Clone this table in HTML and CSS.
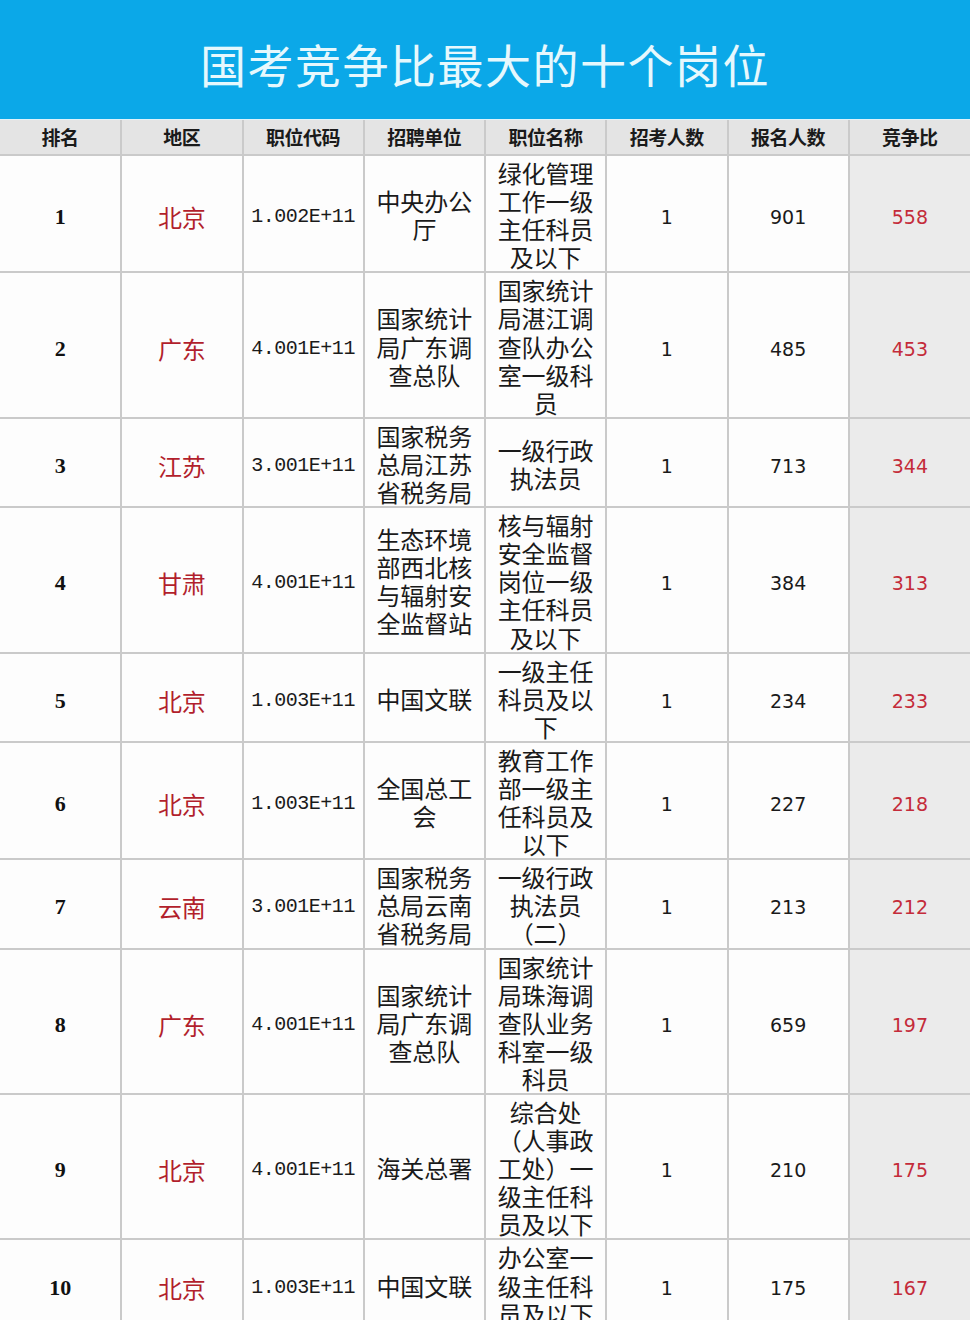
FILE: index.html
```html
<!DOCTYPE html>
<html lang="zh-CN">
<head>
<meta charset="utf-8">
<title>国考竞争比最大的十个岗位</title>
<link rel="stylesheet" href="styles.css">
</head>
<body>
<div class="page">
  <header class="banner">
    <h1 class="title">国考竞争比最大的十个岗位</h1>
  </header>
  <table class="grid">
    <colgroup>
      <col><col><col><col><col><col><col><col>
    </colgroup>
    <thead>
      <tr>
        <th>排名</th><th>地区</th><th>职位代码</th><th>招聘单位</th><th>职位名称</th><th>招考人数</th><th>报名人数</th><th>竞争比</th>
      </tr>
    </thead>
    <tbody>
      <tr>
        <td class="rank">1</td><td class="region">北京</td><td class="code">1.002E+11</td><td class="zh">中央办公厅</td><td class="zh">绿化管理工作一级主任科员及以下</td><td class="num">1</td><td class="num">901</td><td class="ratio">558</td>
      </tr>
      <tr>
        <td class="rank">2</td><td class="region">广东</td><td class="code">4.001E+11</td><td class="zh">国家统计局广东调查总队</td><td class="zh">国家统计局湛江调查队办公室一级科员</td><td class="num">1</td><td class="num">485</td><td class="ratio">453</td>
      </tr>
      <tr>
        <td class="rank">3</td><td class="region">江苏</td><td class="code">3.001E+11</td><td class="zh">国家税务总局江苏省税务局</td><td class="zh">一级行政执法员</td><td class="num">1</td><td class="num">713</td><td class="ratio">344</td>
      </tr>
      <tr>
        <td class="rank">4</td><td class="region">甘肃</td><td class="code">4.001E+11</td><td class="zh">生态环境部西北核与辐射安全监督站</td><td class="zh">核与辐射安全监督岗位一级主任科员及以下</td><td class="num">1</td><td class="num">384</td><td class="ratio">313</td>
      </tr>
      <tr>
        <td class="rank">5</td><td class="region">北京</td><td class="code">1.003E+11</td><td class="zh">中国文联</td><td class="zh">一级主任科员及以下</td><td class="num">1</td><td class="num">234</td><td class="ratio">233</td>
      </tr>
      <tr>
        <td class="rank">6</td><td class="region">北京</td><td class="code">1.003E+11</td><td class="zh">全国总工会</td><td class="zh">教育工作部一级主任科员及以下</td><td class="num">1</td><td class="num">227</td><td class="ratio">218</td>
      </tr>
      <tr>
        <td class="rank">7</td><td class="region">云南</td><td class="code">3.001E+11</td><td class="zh">国家税务总局云南省税务局</td><td class="zh">一级行政执法员（二）</td><td class="num">1</td><td class="num">213</td><td class="ratio">212</td>
      </tr>
      <tr>
        <td class="rank">8</td><td class="region">广东</td><td class="code">4.001E+11</td><td class="zh">国家统计局广东调查总队</td><td class="zh">国家统计局珠海调查队业务科室一级科员</td><td class="num">1</td><td class="num">659</td><td class="ratio">197</td>
      </tr>
      <tr>
        <td class="rank">9</td><td class="region">北京</td><td class="code">4.001E+11</td><td class="zh">海关总署</td><td class="zh">综合处（人事政工处）一级主任科员及以下</td><td class="num">1</td><td class="num">210</td><td class="ratio">175</td>
      </tr>
      <tr>
        <td class="rank">10</td><td class="region">北京</td><td class="code">1.003E+11</td><td class="zh">中国文联</td><td class="zh">办公室一级主任科员及以下</td><td class="num">1</td><td class="num">175</td><td class="ratio">167</td>
      </tr>
    </tbody>
  </table>
</div>
</body>
</html>
```
FILE: styles.css
```css
html, body {
  margin: 0;
  padding: 0;
  background: #ffffff;
}

.page {
  width: 970px;
  font-family: "Noto Sans CJK SC", "Noto Sans", sans-serif;
  color: #151515;
}

.banner {
  height: 119px;
  background: #0ba8e8;
  display: flex;
  align-items: center;
  justify-content: center;
  border-bottom: 1px solid #dff2fa;
}

.title {
  margin: 0;
  padding: 6px 0 0 0;
  font-family: "Noto Sans CJK SC", sans-serif;
  font-weight: 400;
  font-size: 46px;
  letter-spacing: 1.5px;
  color: #e6f8fd;
  line-height: 1;
}

.grid {
  width: 970px;
  table-layout: fixed;
  border-collapse: collapse;
  border-spacing: 0;
}

.grid col {
  width: 121.25px;
}

.grid th,
.grid td {
  border: 2px solid #cacaca;
  padding: 0 6px;
  text-align: center;
  vertical-align: middle;
}

.grid tr > :first-child {
  border-left: none;
}

.grid tr > :last-child {
  border-right: none;
}

.grid thead tr > * {
  border-top: none;
}

.grid th {
  background: #e4e4e4;
  font-weight: 700;
  font-size: 19px;
  line-height: 34px;
  color: #1a1a1a;
  letter-spacing: -0.5px;
}

.grid td {
  background: #fdfdfd;
  font-size: 24px;
  line-height: 28.1px;
  padding-top: 7px;
  overflow: hidden;
  color: #1a1a1a;
}

.grid td.zh {
  padding-top: 3px;
}

.grid td.rank {
  font-family: "Liberation Serif", serif;
  font-weight: 700;
  font-size: 22px;
  color: #111;
}

.grid td.region {
  color: #b21f2c;
}

.grid td.code {
  font-family: "Liberation Mono", monospace;
  font-size: 20px;
  letter-spacing: -0.5px;
  padding-left: 0;
  padding-right: 0;
  color: #1a1a1a;
}

.grid td.num {
  font-family: "DejaVu Sans", sans-serif;
  font-size: 19px;
  color: #1a1a1a;
}

.grid td.ratio {
  background: #ebebeb;
  font-family: "DejaVu Sans", sans-serif;
  font-size: 19px;
  color: #c42b3a;
}
```
